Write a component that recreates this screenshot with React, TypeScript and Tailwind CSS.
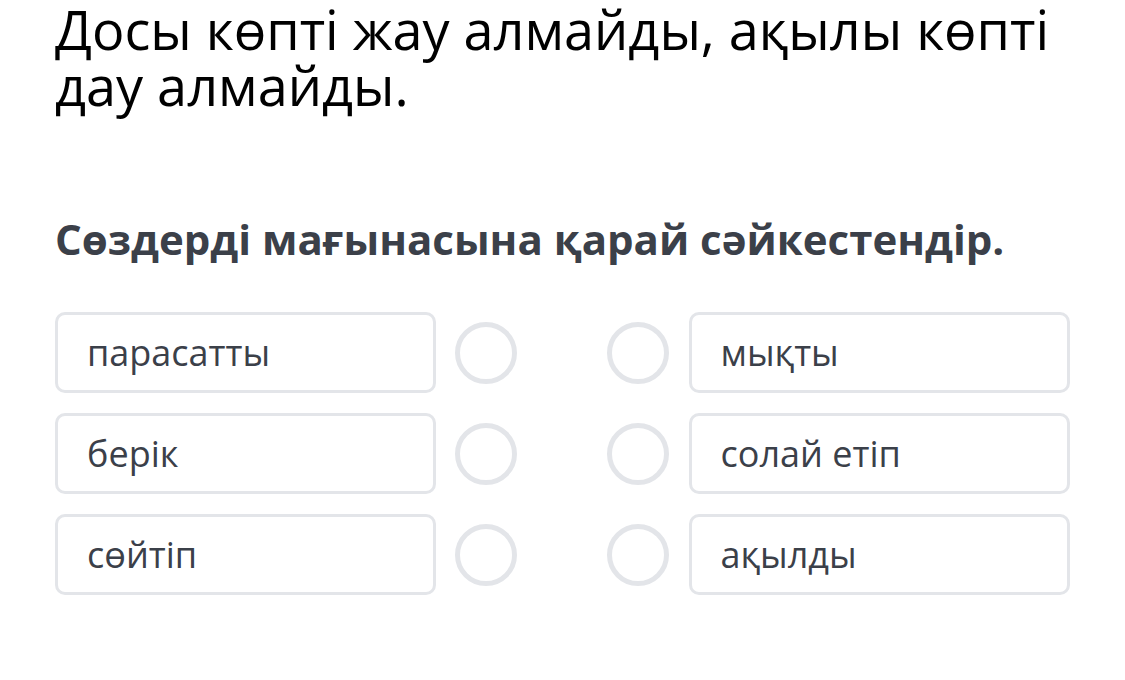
import React from "react";

const left = ["парасатты", "берік", "сөйтіп"];
const right = ["мықты", "солай етіп", "ақылды"];

function Circle() {
  return <div className="w-[62px] h-[62px] rounded-full border-[5px] border-[#e3e5e9] shrink-0" />;
}

export default function App() {
  return (
    <div className="w-[1125px] min-h-[680px] bg-white px-[55px]" style={{ fontFamily: '"Open Sans", sans-serif' }}>
      <h1 className="text-[54px] leading-[56px] text-black pt-[1px] m-0 font-normal">
        Досы көпті жау алмайды, ақылы көпті дау алмайды.
      </h1>
      <h2 className="mt-[101px] text-[42px] leading-[50px] font-bold text-[#3b4049] whitespace-nowrap">
        Сөздерді мағынасына қарай сәйкестендір.
      </h2>
      <div className="mt-[48px] flex flex-col gap-[20px]">
        {left.map((l, i) => (
          <div key={i} className="flex items-center">
            <div className="w-[381px] h-[81px] rounded-[10px] border-[3px] border-[#e3e5e9] flex items-center pl-[29px] text-[36px] text-[#3b4049]">
              {l}
            </div>
            <div className="ml-[19px]"><Circle /></div>
            <div className="ml-[90px]"><Circle /></div>
            <div className="ml-[20px] w-[382px] h-[81px] rounded-[10px] border-[3px] border-[#e3e5e9] flex items-center pl-[29px] text-[36px] text-[#3b4049]">
              {right[i]}
            </div>
          </div>
        ))}
      </div>
    </div>
  );
}
